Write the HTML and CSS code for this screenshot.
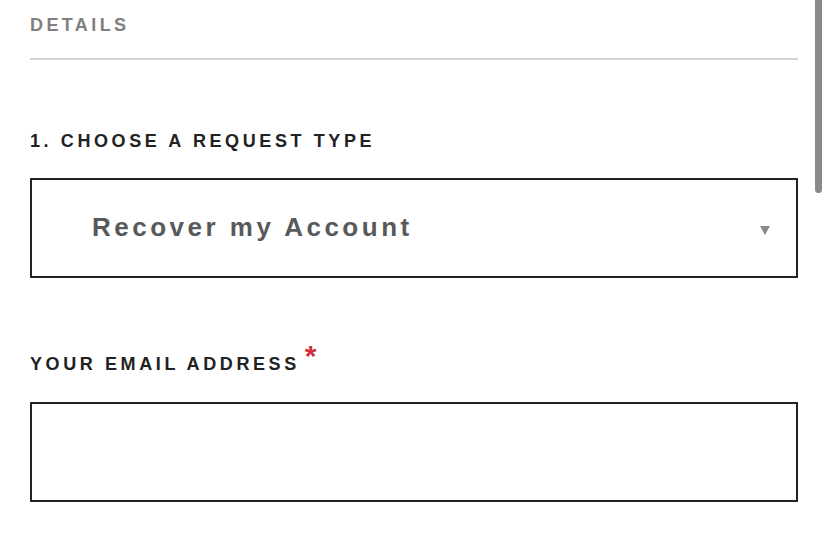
FILE: index.html
```html
<!DOCTYPE html>
<html lang="en">
<head>
<meta charset="utf-8">
<title>Details</title>
<link rel="stylesheet" href="styles.css">
</head>
<body>
<main class="page">
  <header class="section-head">
    <h2 class="section-title">DETAILS</h2>
  </header>
  <form class="form">
    <div class="field field-type">
      <label class="label">1. CHOOSE A REQUEST TYPE</label>
      <div class="select" role="combobox" aria-expanded="false">
        <span class="select-value">Recover my Account</span>
        <span class="select-arrow" aria-hidden="true"></span>
      </div>
    </div>
    <div class="field field-email">
      <label class="label" for="email">YOUR EMAIL ADDRESS<span class="req">*</span></label>
      <input class="input" id="email" type="email">
    </div>
  </form>
</main>
<div class="scrollbar" aria-hidden="true"></div>
</body>
</html>
```

FILE: styles.css
```css
html, body {
  margin: 0;
  padding: 0;
  background: #ffffff;
}

body {
  font-family: "Liberation Sans", Arial, Helvetica, sans-serif;
  overflow: hidden;
}

.page {
  padding: 16px 30px 0 30px;
}

.section-head {
  padding-bottom: 24px;
  border-bottom: 2px solid #d4d4d4;
}

.section-title {
  margin: 0;
  font-size: 18px;
  line-height: 18px;
  font-weight: 700;
  letter-spacing: 3.4px;
  color: #808080;
}

.form {
  display: flex;
  flex-direction: column;
}

.field {
  display: flex;
  flex-direction: column;
}

.field-type {
  margin-top: 72px;
  gap: 28px;
}

.field-email {
  margin-top: 77px;
  gap: 29px;
}

.label {
  display: block;
  font-size: 18px;
  line-height: 18px;
  font-weight: 700;
  letter-spacing: 3.6px;
  color: #222222;
}

.req {
  font-size: 30px;
  line-height: 0;
  color: #d0313f;
  letter-spacing: 0;
  margin-left: 5px;
  vertical-align: 4px;
}

.select {
  box-sizing: border-box;
  height: 100px;
  border: 2px solid #222222;
  display: flex;
  align-items: center;
  justify-content: space-between;
  padding: 0 26px 0 60px;
}

.select-value {
  font-size: 26px;
  line-height: 28px;
  font-weight: 700;
  letter-spacing: 3.5px;
  color: #58595b;
  margin-top: -3px;
}

.select-arrow {
  width: 0;
  height: 0;
  border-left: 5.5px solid transparent;
  border-right: 5.5px solid transparent;
  border-top: 9px solid #8a8a8a;
  margin-top: 5px;
}

.input {
  display: block;
  box-sizing: border-box;
  width: 100%;
  height: 100px;
  margin: 0;
  border: 2px solid #222222;
  border-radius: 0;
  background: #ffffff;
  outline: none;
  padding: 0 20px;
  font-family: inherit;
  font-size: 20px;
}

.scrollbar {
  position: absolute;
  top: 0;
  right: 6px;
  width: 7px;
  height: 193px;
  background: #8a8a8a;
  border-radius: 0 0 4px 4px;
}
```
